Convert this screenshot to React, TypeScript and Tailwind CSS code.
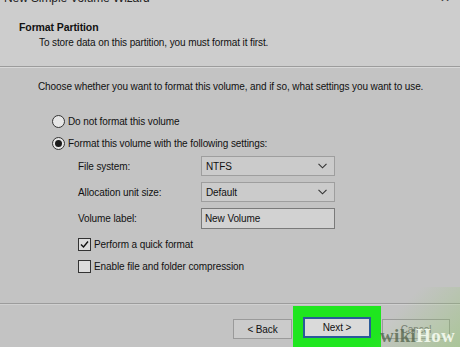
import React from "react";

function Radio({ checked }: { checked?: boolean }) {
  return (
    <span className="w-[13px] h-[13px] rounded-full border border-[#333] bg-[#e6e6e6] flex items-center justify-center shrink-0">
      {checked && <span className="w-[7px] h-[7px] rounded-full bg-[#1a1a1a]" />}
    </span>
  );
}

function Check({ checked }: { checked?: boolean }) {
  return (
    <span className="w-[13px] h-[13px] border border-[#333] bg-[#dcdcdc] flex items-center justify-center shrink-0">
      {checked && (
        <svg width="11" height="11" viewBox="0 0 11 11">
          <path d="M2 5.5 L4.5 8 L9 2.5" fill="none" stroke="#111" strokeWidth="1.4" />
        </svg>
      )}
    </span>
  );
}

function Select({ value }: { value: string }) {
  return (
    <div className="w-[134px] h-[20px] border border-[#9e9e9e] bg-[#cbcbcb] flex items-center justify-between pl-[4px] pr-[7px]">
      <span>{value}</span>
      <svg width="9" height="6" viewBox="0 0 9 6">
        <path d="M0.5 0.8 L4.5 4.8 L8.5 0.8" fill="none" stroke="#333" strokeWidth="1.1" />
      </svg>
    </div>
  );
}

export default function App() {
  return (
    <div
      className="w-[460px] h-[347px] overflow-hidden relative bg-[#c3c3c3] text-[#111] flex flex-col"
      style={{ fontFamily: '"Liberation Sans", Arial, sans-serif', fontSize: "10px", letterSpacing: "-0.1px" }}
    >
      {/* header band */}
      <div className="h-[66px] bg-[#cdcdcd] shrink-0 flex flex-col">
        <div className="flex justify-between items-start h-[6px] overflow-visible">
          <span className="pl-[4px] -mt-[9px] leading-[14px] text-[12px] text-[#222]">New Simple Volume Wizard</span>
          <span className="pr-[10px] -mt-[9px] leading-[14px] text-[12px] text-[#333]">✕</span>
        </div>
        <div className="pl-[19px] mt-[14px] font-bold leading-[14px] text-[10.5px]">Format Partition</div>
        <div className="pl-[39px] mt-[2px] leading-[14px]">To store data on this partition, you must format it first.</div>
      </div>
      <div className="h-[1px] bg-[#9c9c9c] shrink-0" />
      <div className="h-[1px] bg-[#d8d8d8] shrink-0" />

      {/* body */}
      <div className="flex flex-col pl-[38px] h-[235px] shrink-0">
        <div className="mt-[12px] leading-[14px]">
          Choose whether you want to format this volume, and if so, what settings you want to use.
        </div>
        <div className="pl-[14px] mt-[20px] flex items-center gap-[3px] h-[14px]">
          <Radio />
          <span>Do not format this volume</span>
        </div>
        <div className="pl-[14px] mt-[8px] flex items-center gap-[3px] h-[14px]">
          <Radio checked />
          <span>Format this volume with the following settings:</span>
        </div>
        <div className="pl-[40px] mt-[6px] flex flex-col gap-[6px]">
          <div className="flex items-center">
            <span className="w-[123px]">File system:</span>
            <Select value="NTFS" />
          </div>
          <div className="flex items-center">
            <span className="w-[123px]">Allocation unit size:</span>
            <Select value="Default" />
          </div>
          <div className="flex items-center">
            <span className="w-[123px]">Volume label:</span>
            <div className="w-[134px] h-[21px] border border-[#7a7a7a] bg-[#d2d2d2] flex items-center pl-[3px]">New Volume</div>
          </div>
        </div>
        <div className="pl-[40px] mt-[8px] flex items-center gap-[3px] h-[14px]">
          <Check checked />
          <span>Perform a quick format</span>
        </div>
        <div className="pl-[40px] mt-[8px] flex items-center gap-[3px] h-[14px]">
          <Check />
          <span>Enable file and folder compression</span>
        </div>
      </div>
      <div className="h-[1px] bg-[#9c9c9c] shrink-0" />
      <div className="h-[1px] bg-[#d0d0d0] shrink-0" />

      {/* footer */}
      <div className="flex-1 flex pl-[233px] items-start">
        <div className="mt-[14px] w-[59px] h-[20px] border border-[#9a9a9a] bg-[#cbcbcb] flex items-center justify-center">
          &lt; Back
        </div>
        <div className="ml-[1px] w-[88px] h-[42px] bg-[#1fe61f] flex justify-center pt-[11px] mt-[1px]">
          <div className="w-[68px] h-[21px] border border-[#2a5a9a] bg-[#2a5a9a] p-[1px]">
            <div className="w-full h-full bg-[#dadada] flex items-center justify-center">Next &gt;</div>
          </div>
        </div>
        <div className="ml-[1px] mt-[14px] w-[68px] h-[20px] border border-[#9a9a9a] bg-[#c8c8c8] flex items-center justify-center text-[#777]">
          Cancel
        </div>
      </div>

      {/* wikiHow watermark overlay */}
      <div
        className="absolute right-0 bottom-0 w-[120px] h-[60px] pointer-events-none"
        style={{ background: "linear-gradient(135deg, rgba(140,200,100,0) 45%, rgba(140,200,100,0.45) 100%)" }}
      />
      <div
        className="absolute right-[5px] bottom-[1px] text-[19px] font-bold leading-[20px] tracking-[0.3px]"
        style={{ fontFamily: '"Liberation Serif", "DejaVu Serif", serif' }}
      >
        <span className="text-[#56664e]/80">wiki</span>
        <span className="text-[#eef5e8]">How</span>
      </div>
    </div>
  );
}
